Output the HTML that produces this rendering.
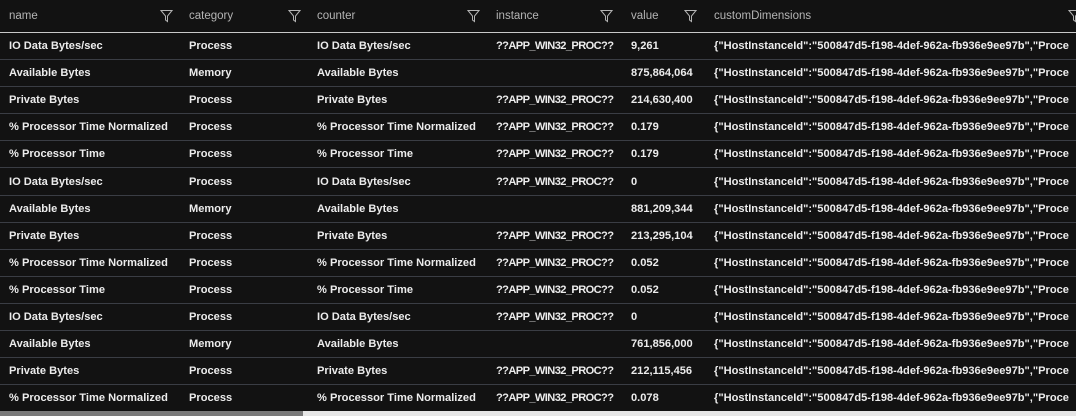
<!DOCTYPE html>
<html><head><style>
body{margin:0;width:1076px;height:416px;overflow:hidden;background:#121212;font-family:"Liberation Sans",sans-serif;}
.h{position:absolute;top:0;left:0;width:1076px;height:32px;border-bottom:1px solid #c8c8c8;overflow:hidden;}
.h span{position:absolute;top:10px;font-size:11.5px;color:#b4b4b4;}
.h svg{position:absolute;top:9px;}
.r{position:absolute;left:0;width:1076px;height:26px;border-bottom:1px solid #3a3d44;overflow:hidden;}
.r span{position:absolute;top:7px;font-size:11.1px;font-weight:bold;color:#ececec;white-space:nowrap;}
.r span.i{letter-spacing:-0.6px;}
.sb{position:absolute;top:411px;left:0;width:1076px;height:5px;background:#e6e6e6;}
.sb div{width:303px;height:5px;background:#7a7a7a;}
</style></head><body>
<div class="h">
<span style="left:9px">name</span><svg style="left:160px" width="13" height="14" viewBox="0 0 13 14"><path d="M1 1.5H12L7.5 7V12.5L5.5 11V7Z" fill="none" stroke="#b4b4b4"/></svg>
<span style="left:189px">category</span><svg style="left:288px" width="13" height="14" viewBox="0 0 13 14"><path d="M1 1.5H12L7.5 7V12.5L5.5 11V7Z" fill="none" stroke="#b4b4b4"/></svg>
<span style="left:317px">counter</span><svg style="left:467px" width="13" height="14" viewBox="0 0 13 14"><path d="M1 1.5H12L7.5 7V12.5L5.5 11V7Z" fill="none" stroke="#b4b4b4"/></svg>
<span style="left:496px">instance</span><svg style="left:600px" width="13" height="14" viewBox="0 0 13 14"><path d="M1 1.5H12L7.5 7V12.5L5.5 11V7Z" fill="none" stroke="#b4b4b4"/></svg>
<span style="left:631px">value</span><svg style="left:684px" width="13" height="14" viewBox="0 0 13 14"><path d="M1 1.5H12L7.5 7V12.5L5.5 11V7Z" fill="none" stroke="#b4b4b4"/></svg>
<span style="left:714px">customDimensions</span><svg style="left:1068px" width="8" height="14" viewBox="0 0 8 14"><path d="M1 1.5H12L7.5 7V12.5L5.5 11V7Z" fill="none" stroke="#b4b4b4"/></svg>
</div>
<div id="rows"></div>
<div class="sb"><div></div></div>
<script>
var d=[["IO Data Bytes/sec","Process","IO Data Bytes/sec",1,"9,261"],
["Available Bytes","Memory","Available Bytes",0,"875,864,064"],
["Private Bytes","Process","Private Bytes",1,"214,630,400"],
["% Processor Time Normalized","Process","% Processor Time Normalized",1,"0.179"],
["% Processor Time","Process","% Processor Time",1,"0.179"],
["IO Data Bytes/sec","Process","IO Data Bytes/sec",1,"0"],
["Available Bytes","Memory","Available Bytes",0,"881,209,344"],
["Private Bytes","Process","Private Bytes",1,"213,295,104"],
["% Processor Time Normalized","Process","% Processor Time Normalized",1,"0.052"],
["% Processor Time","Process","% Processor Time",1,"0.052"],
["IO Data Bytes/sec","Process","IO Data Bytes/sec",1,"0"],
["Available Bytes","Memory","Available Bytes",0,"761,856,000"],
["Private Bytes","Process","Private Bytes",1,"212,115,456"],
["% Processor Time Normalized","Process","% Processor Time Normalized",1,"0.078"]];
var h="";
d.forEach(function(r,i){
h+='<div class="r" style="top:'+(33+i*27.1)+'px"><span style="left:9px">'+r[0]+'</span><span style="left:189px">'+r[1]+'</span><span style="left:317px">'+r[2]+'</span>'+(r[3]?'<span class="i" style="left:496px">??APP_WIN32_PROC??</span>':'')+'<span style="left:631px">'+r[4]+'</span><span style="left:714px">{"HostInstanceId":"500847d5-f198-4def-962a-fb936e9ee97b","Proce</span></div>';
});
document.getElementById("rows").innerHTML=h;
</script>
</body></html>
